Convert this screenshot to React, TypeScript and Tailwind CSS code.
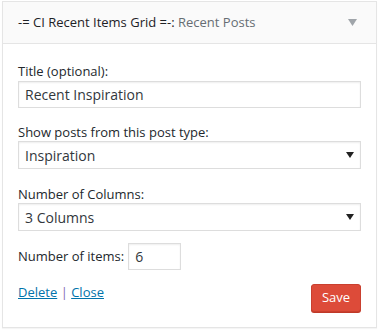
import React from 'react';

const fieldCls =
  'block w-full h-[27px] border border-[#dddddd] bg-white px-[6px] text-[14px] text-[#32373c] shadow-[inset_0_1px_2px_rgba(0,0,0,0.07)]';

const Select: React.FC<{ value: string }> = ({ value }) => (
  <div className={`${fieldCls} h-[28px] flex items-center justify-between pr-[6px]`}>
    <span>{value}</span>
    <svg width="8" height="6" viewBox="0 0 8 6" className="text-[#222]">
      <path d="M0 0h8L4 6z" fill="currentColor" />
    </svg>
  </div>
);

const App: React.FC = () => {
  return (
    <div className="w-[379px] h-[332px] bg-white pl-[2px] pt-[1px] font-['Open_Sans',sans-serif] text-[13px] text-[#23282d]">
      <div className="w-[375px] h-[327px] border border-[#e5e5e5] bg-white shadow-[0_1px_1px_rgba(0,0,0,0.04)]">
        {/* Header */}
        <div className="h-[42px] flex items-center justify-between px-[15px] bg-[#fafafa] border-b border-[#e5e5e5]">
          <h3 className="text-[13px] font-medium text-[#1e2226]">
            -= CI Recent Items Grid =-: <span className="font-normal text-[#666d73]">Recent Posts</span>
          </h3>
          <svg width="9" height="7" viewBox="0 0 9 7" className="mr-[4px] text-[#a0a5aa]">
            <path d="M0 0h9L4.5 7z" fill="currentColor" />
          </svg>
        </div>

        {/* Form */}
        <div className="px-[15px]">
          <label className="block mt-[18px] leading-[18px]">Title (optional):</label>
          <input
            className={`${fieldCls} h-[26px] mt-[1px] outline-none`}
            defaultValue="Recent Inspiration"
          />

          <label className="block mt-[15px] leading-[18px]">Show posts from this post type:</label>
          <Select value="Inspiration" />

          <label className="block mt-[16px] leading-[18px]">Number of Columns:</label>
          <Select value="3 Columns" />

          <div className="flex items-center mt-[12px]">
            <span>Number of items:</span>
            <input
              className="ml-[4px] w-[53px] h-[27px] border border-[#dddddd] px-[6px] text-[14px] text-[#32373c] shadow-[inset_0_1px_2px_rgba(0,0,0,0.07)] outline-none"
              defaultValue="6"
            />
          </div>

          <div className="flex items-start justify-between mt-[14px]">
            <div className="mt-[-1px] leading-[18px]">
              <a href="#" className="text-[#0073aa] underline">Delete</a>
              <span className="text-[#826eb4]"> | </span>
              <a href="#" className="text-[#0073aa] underline">Close</a>
            </div>
            <button className="w-[50px] h-[28px] rounded-[3px] bg-[#dd4b39] border border-[#c9402f] text-white text-[13px] shadow-[0_1px_0_#c03928]">
              Save
            </button>
          </div>
        </div>
      </div>
    </div>
  );
};

export default App;
